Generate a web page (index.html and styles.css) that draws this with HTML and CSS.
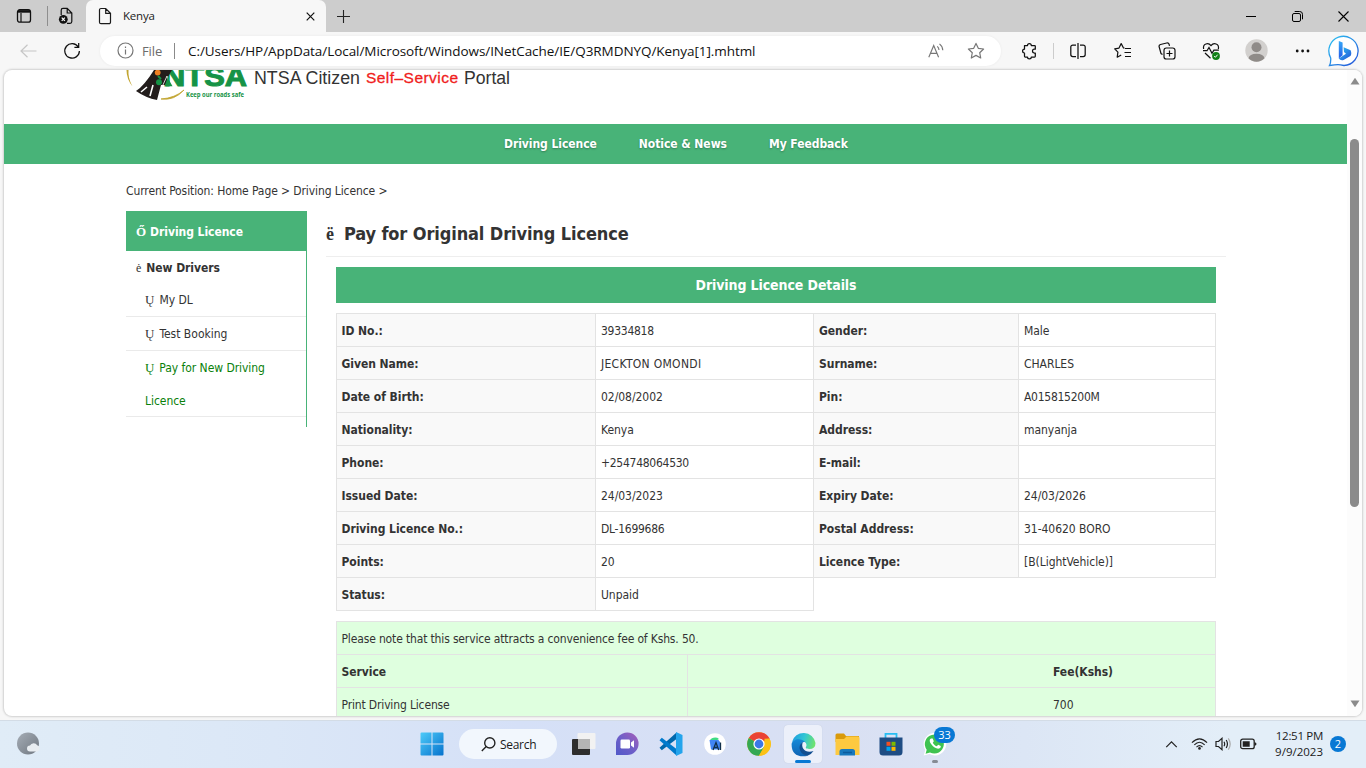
FILE: index.html
```html
<!DOCTYPE html>
<html lang="en">
<head>
<meta charset="utf-8">
<title>Kenya</title>
<link rel="stylesheet" href="styles.css">
</head>
<body>
<header class="tabbar">
  <svg class="tb-workspace" width="16" height="16" viewBox="0 0 16 16" fill="none" stroke="#111"><rect x="1.5" y="1.7" width="13" height="12.5" rx="2.3" stroke-width="1.3"/><path d="M5 5v9" stroke-width="1.2"/><path d="M2 3.4h12" stroke-width="2.6"/></svg>
  <i class="tb-line"></i>
  <svg class="tb-saved" width="16" height="18" viewBox="0 0 16 18" fill="none" stroke="#111" stroke-width="1.2"><path d="M3.2 8V3.2A1.8 1.8 0 0 1 5 1.4h4.2l4.6 4.6v8.5a1.8 1.8 0 0 1-1.8 1.8H9M9.2 1.4V6h4.6"/><circle cx="5.3" cy="12.3" r="4.4" fill="#111" stroke="none"/><path d="m3.7 10.7 3.2 3.2m0-3.2-3.2 3.2" stroke="#fff"/></svg>
  <div class="tab">
    <svg width="14" height="18" viewBox="0 0 14 18" fill="none" stroke="#1b1b1b" stroke-width="1.2"><path d="M3 1.5h4.7L12.5 6.3v8.9a1.5 1.5 0 0 1-1.5 1.5H3a1.5 1.5 0 0 1-1.5-1.5V3A1.5 1.5 0 0 1 3 1.5zM7.7 1.5v4.8h4.8"/></svg>
    <span class="tab-title">Kenya</span>
    <svg class="tab-close" width="9" height="9" viewBox="0 0 9 9" stroke="#111" stroke-width="1.2"><path d="m.7.7 7.6 7.6m0-7.6L.7 8.3"/></svg>
  </div>
  <svg class="new-tab" width="13" height="13" viewBox="0 0 13 13" stroke="#222" stroke-width="1.1"><path d="M6.5 0v13M0 6.5h13"/></svg>
  <div class="win-controls">
    <span><svg width="10" height="10" viewBox="0 0 10 10" stroke="#000"><path d="M0 5.5h10"/></svg></span>
    <span><svg width="11" height="11" viewBox="0 0 11 11" fill="none" stroke="#000"><rect x=".5" y="2.5" width="8" height="8" rx="1.5"/><path d="M2.7.5h5a2.8 2.8 0 0 1 2.8 2.8v5"/></svg></span>
    <span><svg width="11" height="11" viewBox="0 0 11 11" stroke="#000" stroke-width="1.1"><path d="m.5.5 10 10m0-10-10 10"/></svg></span>
  </div>
</header>

<div class="toolbar">
  <svg class="back" width="17" height="14" viewBox="0 0 17 14" fill="none" stroke="#c6c6c6" stroke-width="1.2"><path d="M16.5 7H1M7.5.7 1 7l6.5 6.3"/></svg>
  <svg class="reload" width="18" height="18" viewBox="0 0 18 18" fill="none" stroke="#111" stroke-width="1.25"><path d="M15.3 5A7.3 7.3 0 1 0 16.4 9M15.7 1v4.3h-4.3"/></svg>
  <div class="address">
    <svg width="17" height="17" viewBox="0 0 17 17" fill="none" stroke="#777" stroke-width="1.2"><circle cx="8.5" cy="8.5" r="7.5"/><path d="M8.5 7.5v5M8.5 4.5v1.4"/></svg>
    <span class="scheme">File</span><i></i><span class="url">C:/Users/HP/AppData/Local/Microsoft/Windows/INetCache/IE/Q3RMDNYQ/Kenya[1].mhtml</span>
    <svg class="read" width="16" height="16" viewBox="0 0 16 16" fill="none" stroke="#777" stroke-width="1.15"><path d="M.8 14.2 5.7 2.5l4.9 11.7M2.5 10.300h6.400M9.300 3.300q1.600 1.500 1.700 3.700M11.500.9q3.200 2.600 3.300 6.400"/></svg>
    <svg class="star" width="18" height="18" viewBox="0 0 18 18" fill="none" stroke="#777" stroke-width="1.2" stroke-linejoin="round"><path d="m9 1.400 2.300 4.900 5.300.7-3.900 3.700 1 5.300L9 13.400 4.300 16l1-5.300L1.400 7l5.300-.7z"/></svg>
  </div>
  <div class="actions">
    <svg class="puzzle" width="18" height="18" viewBox="0 0 18 18" fill="none" stroke="#111" stroke-width="1.25" stroke-linejoin="round"><path d="M4.500 3.500h3a1.900 1.900 0 0 1 3.800 0h3.200a.8.8 0 0 1 .8.8v2.900h-.9a1.900 1.900 0 0 0 0 3.800h.9v3.200a.8.8 0 0 1-.8.8h-3.200a1.900 1.900 0 0 1-3.800 0h-2.200a.8.8 0 0 1-.8-.8v-3.200a1.900 1.900 0 0 1 0-3.800z"/></svg>
    <i></i>
    <svg class="split" width="18" height="18" viewBox="0 0 18 18" fill="none" stroke="#111" stroke-width="1.25"><path d="M7 3H3.800a2 2 0 0 0-2 2v7.500a2 2 0 0 0 2 2H7M11 3h3.200a2 2 0 0 1 2 2v7.500a2 2 0 0 1-2 2H11M9 1v16"/></svg>
    <svg class="favs" width="18" height="18" viewBox="0 0 18 18" fill="none" stroke="#111" stroke-width="1.2" stroke-linejoin="round"><path d="M10.500 6.200 9.500 6 7.200 1.600 5 6.100l-4.300.7 3.200 3.400-.7 5 4-2.200M11 6.500h6M10.500 10.500H17M11 14.500h6"/></svg>
    <svg class="collect" width="18" height="18" viewBox="0 0 18 18" fill="none" stroke="#111" stroke-width="1.2"><rect x="6" y="6" width="11" height="11" rx="2.3"/><path d="M11.500 8.500v6M8.500 11.500h6M4.500 12.500 3 11.500 1.200 5a2 2 0 0 1 1.300-2.500L8.700 1a2 2 0 0 1 2.400 1.300l.4 1.500"/></svg>
    <svg class="health" width="18" height="18" viewBox="0 0 18 18" fill="none" stroke="#111" stroke-width="1.2"><path d="M1.600 7C.6 1.500 6.300.2 9 3.600 11.700.2 17.400 1.500 16.400 7M3 11l5.500 5.300M1 8.700h4L7 5.400l3 5.800 1.900-3h5"/><circle cx="14" cy="14" r="3.9" fill="#128017" stroke="none"/><path d="m12.200 14 1.200 1.300 2.200-2.600" stroke="#fff" stroke-width="1"/></svg>
    <svg class="avatar" width="23" height="23" viewBox="0 0 23 23"><circle cx="11.500" cy="11.500" r="11.200" fill="#d2d0ce"/><circle cx="11.500" cy="8.300" r="5" fill="#8f8b88"/><path d="M3.500 19.300q1-4.600 8-4.600t8 4.600a11.200 11.200 0 0 1-16 0z" fill="#8f8b88"/></svg>
    <svg class="dots" width="16" height="4" viewBox="0 0 16 4" fill="#111"><circle cx="2.200" cy="2" r="1.400"/><circle cx="7.600" cy="2" r="1.400"/><circle cx="13" cy="2" r="1.400"/></svg>
    <svg class="bing" width="32" height="32" viewBox="0 0 32 32"><defs><linearGradient id="bo" x1="0" y1="0" x2="1" y2="1"><stop stop-color="#2cc5f2"/><stop offset="1" stop-color="#2450d8"/></linearGradient><linearGradient id="bi" x1="0" y1="0" x2="0" y2="1"><stop stop-color="#36a8f7"/><stop offset="1" stop-color="#245be8"/></linearGradient></defs><path d="M1.500 30.500q1.500-2.500 1.200-7.500A14.600 14.600 0 1 1 16 30.500q-4-.8-6-.8-3 0-8.500.8z" fill="#fff" stroke="url(#bo)" stroke-width="1.3"/><path d="m10.800 6 3.800 1.500v12.800l-3.800 3.300z" fill="url(#bi)"/><path d="m15.600 12.200 7 3c1 2.500.9 4.500-.2 5.900l-6.800 3.900q-3.100 1-4.800-1.400l7.200-4.800-2-1.700z" fill="url(#bo)"/></svg>
  </div>
</div>

<div class="viewport">
  <main class="page">
    <div class="brand">
      <svg width="390" height="36" viewBox="0 0 390 36">
        <path d="M.5 0Q.5 9 6.500 16.500 1.800 8 2.500 0z" fill="#c2a531"/>
        <path d="M35 29q13 2 23-9-9 8-23 9z" fill="#c2a531" stroke="#c2a531" stroke-width=".8"/>
        <text class="logo-word" x="37" y="16.3" textLength="84" lengthAdjust="spacingAndGlyphs">NTSA</text>
        <path d="M10 21q8-5 18-21h18q-5 7-7 15h-4l-4 15q-11-2-21-9z" fill="#231d1c"/>
        <path d="m15 22 6-5m3 9 3-11" stroke="#fff" stroke-width="1.6"/>
        <path d="m36 17 5-11 2 9" stroke="#fff" stroke-width=".8" fill="none"/>
        <path d="m40 16.300 1.500-9 5 9z" fill="#169346"/>
        <circle cx="31.700" cy="2.600" r="2.900" fill="#ef7f22"/><circle cx="33" cy="12.300" r="3" fill="#169346"/><path d="m32 6 3 3" stroke="#169346" stroke-width="2"/>
        <text class="logo-tag" x="60" y="26.500" textLength="58" lengthAdjust="spacingAndGlyphs">Keep our roads safe</text>
        <text class="portal" x="128" y="13.500" textLength="106" lengthAdjust="spacingAndGlyphs">NTSA Citizen</text>
        <text class="portal self" x="240" y="13" textLength="92" lengthAdjust="spacing">Self–Service</text>
        <text class="portal" x="338" y="13.500" textLength="46" lengthAdjust="spacingAndGlyphs">Portal</text>
      </svg>
    </div>
    <nav class="nav"><a>Driving Licence</a><a>Notice &amp; News</a><a>My Feedback</a></nav>
    <div class="wrap">
      <div class="crumbs">Current Position: Home Page &gt; Driving Licence &gt;</div>
      <div class="cols">
        <aside class="side">
          <h2><b class="glyph">Ő</b>Driving Licence</h2>
          <h3><b class="glyph">ė</b>New Drivers</h3>
          <ul>
            <li><b class="glyph">Ų</b>My DL</li>
            <li><b class="glyph">Ų</b>Test Booking</li>
            <li class="current"><b class="glyph">Ų</b>Pay for New Driving Licence</li>
          </ul>
        </aside>
        <section class="main">
          <h1><b class="glyph">ë</b>Pay for Original Driving Licence</h1>
          <div class="panel">
            <div class="banner">Driving Licence Details</div>
            <table class="details">
              <colgroup><col class="c1"><col class="c2"><col class="c3"><col class="c4"></colgroup>
              <tr><th>ID No.:</th><td class="num">39334818</td><th>Gender:</th><td>Male</td></tr>
              <tr><th>Given Name:</th><td class="caps">JECKTON OMONDI</td><th>Surname:</th><td>CHARLES</td></tr>
              <tr><th>Date of Birth:</th><td>02/08/2002</td><th>Pin:</th><td class="num">A015815200M</td></tr>
              <tr><th>Nationality:</th><td>Kenya</td><th>Address:</th><td>manyanja</td></tr>
              <tr><th>Phone:</th><td class="num">+254748064530</td><th>E-mail:</th><td></td></tr>
              <tr><th>Issued Date:</th><td>24/03/2023</td><th>Expiry Date:</th><td>24/03/2026</td></tr>
              <tr><th>Driving Licence No.:</th><td class="num">DL-1699686</td><th>Postal Address:</th><td>31-40620 BORO</td></tr>
              <tr><th>Points:</th><td>20</td><th>Licence Type:</th><td>[B(LightVehicle)]</td></tr>
              <tr><th>Status:</th><td>Unpaid</td></tr>
            </table>
            <table class="fees">
              <colgroup><col class="f1"><col class="f2"></colgroup>
              <tr><td colspan="2" class="note">Please note that this service attracts a convenience fee of Kshs. 50.</td></tr>
              <tr><th>Service</th><th class="fee">Fee(Kshs)</th></tr>
              <tr><td class="note">Print Driving License</td><td class="fee">700</td></tr>
            </table>
          </div>
        </section>
      </div>
    </div>
  </main>
  <div class="scroll"><svg width="10" height="8" viewBox="0 0 10 8"><path d="M5 .8 9.500 7.500H.5z" fill="#8b8b8b"/></svg><i></i><svg class="down" width="10" height="8" viewBox="0 0 10 8"><path d="M5 7.200 9.500.5H.5z" fill="#8b8b8b"/></svg></div>
</div>

<footer class="taskbar">
  <svg class="weather" width="24" height="24" viewBox="0 0 24 24"><defs><linearGradient id="wg" x1="0" y1="0" x2="1" y2="1"><stop stop-color="#a5adb6"/><stop offset="1" stop-color="#707780"/></linearGradient></defs><circle cx="11" cy="11.500" r="11" fill="url(#wg)"/><path d="M13 19.500a3 3 0 0 1 0-6 4 4 0 0 1 7.200-.2 3.200 3.200 0 0 1 .3 6.200z" fill="#e9edf1"/></svg>
  <svg class="start" width="24" height="24" viewBox="0 0 24 24"><defs><linearGradient id="sg" gradientUnits="userSpaceOnUse" x1="0" y1="0" x2="24" y2="24"><stop stop-color="#4fcdfa"/><stop offset="1" stop-color="#0470cc"/></linearGradient></defs><path d="M.5 1.500q0-1 1-1h10v11H.5zM12.500.5h10q1 0 1 1v10h-11zM.5 12.500h11v11h-10q-1 0-1-1zM12.500 12.500h11v10q0 1-1 1h-10z" fill="url(#sg)"/></svg>
  <div class="search"><svg width="15" height="15" viewBox="0 0 15 15" fill="none" stroke="#222" stroke-width="1.4"><circle cx="8.800" cy="5.900" r="5.100"/><path d="M5.200 9.500.8 14"/></svg><span>Search</span></div>
  <div class="apps">
    <span><svg width="25" height="24" viewBox="0 0 25 24"><rect x="6.500" y="1" width="18" height="16" rx="1" fill="#f2f2f2"/><rect x="1" y="7" width="18" height="16" rx="1" fill="#2e2e2e"/><path d="M7 7h12v10H7z" fill="#b5b5b5"/></svg></span>
    <span><svg width="24" height="24" viewBox="0 0 24 24"><defs><linearGradient id="cg" x1="0" y1="1" x2="1" y2="0"><stop stop-color="#5059c9"/><stop offset=".5" stop-color="#6f5fc8"/><stop offset="1" stop-color="#a85fb8"/></linearGradient></defs><path d="M1 23V12A11.300 11.300 0 1 1 12 23z" fill="url(#cg)"/><rect x="5.500" y="7.500" width="9.500" height="9" rx="1.200" fill="#fff"/><path d="m16 10.500 3-2.300v7.600l-3-2.300z" fill="#fff"/></svg></span>
    <span><svg width="26" height="26" viewBox="0 0 26 26"><path d="M18.500 1.500 1.500 16.800l2.300 2.500L18.500 8z" fill="#0068ac"/><path d="M18.500 24.500 1.500 9.200l2.300-2.500L18.500 18z" fill="#007acc"/><path d="m18 1 6.500 3v18L18 25z" fill="#24a4ec"/></svg></span>
    <span><svg width="22" height="22" viewBox="0 0 22 22"><circle cx="11" cy="11" r="10.800" fill="#fff"/><path d="M6 8a5 3.500 0 0 1 9-2l-5 3z" fill="#3ddc84"/><path d="M5.500 7h9l1.500 2v7.500H7z" fill="#4285f4"/><path d="m9 17 3-7.500 2.700 7.500m-4.600-2.500h3.500M16.500 9.500V17" stroke="#123049" stroke-width="1.3" fill="none"/></svg></span>
    <span><svg width="24" height="24" viewBox="0 0 24 24"><circle cx="12" cy="12" r="11.800" fill="#fbc116"/><path d="M12 12 1.780 6.100A11.800 11.800 0 0 1 22.220 6.100z" fill="#ea4335"/><path d="M1.780 6.100A11.800 11.800 0 0 0 12 23.800L17.100 15 12 12z" fill="#34a853"/><path d="M22.220 6.100A11.800 11.800 0 0 1 12 23.800L17.500 14V6.500z" fill="#fbc116"/><path d="M12 6.600h10.500L22.200 6.100H11z" fill="#ea4335"/><circle cx="12" cy="12" r="5.600" fill="#fff"/><circle cx="12" cy="12" r="4.400" fill="#3b78e7"/></svg></span>
    <span class="active"><svg width="25" height="25" viewBox="0 0 25 25"><defs><linearGradient id="e1" x1="0" y1=".3" x2="1" y2=".5"><stop stop-color="#1e9de0"/><stop offset=".5" stop-color="#31c6d4"/><stop offset="1" stop-color="#6fe36e"/></linearGradient><linearGradient id="e2" x1="0" y1="0" x2="0" y2="1"><stop stop-color="#1689d8"/><stop offset="1" stop-color="#0f64b4"/></linearGradient></defs><path d="M1 10A12 12 0 0 1 24.500 11q0 6-6.300 6c-3.300 0-4-1.200-3-2.400 2.300-4.800-7-9.600-14.200-4.600z" fill="url(#e1)"/><path d="M.6 12C2 6 11 6 14.500 10.200q-4.500-.7-5 4Q9.500 21 16 24 .5 26 .6 12z" fill="url(#e2)"/><path d="M12 10q-3.500 1.500-3.500 6 .8 6.300 7.500 8 4.300-1.300 6.500-5c-7.500 3-13.500-3-10.500-9z" fill="#124f91"/></svg></span>
    <span><svg width="25" height="23" viewBox="0 0 25 23"><path d="M.5 2q0-1.500 1.500-1.500h7l2 2.500H24v6H.5z" fill="#d99a0b"/><path d="M.5 6H9l2.500-2.500H23q1.500 0 1.500 1.500v17H.5z" fill="#fdc940"/><path d="M4.500 22.500v-4q0-2.500 2.500-2.500h10.500q2.500 0 2.500 2.500v4z" fill="#1778bd"/><path d="M8 19.500h9" stroke="#0b5b9d" stroke-width="1.5"/></svg></span>
    <span><svg width="24" height="24" viewBox="0 0 24 24"><path d="M6.500 7V1.800h11V7" fill="none" stroke="#27bdf1" stroke-width="1.8"/><path d="M.5 5.500h23V20q0 3.500-3.500 3.500H4q-3.500 0-3.500-3.500z" fill="#1e4c83"/><path d="M7.500 9.800h4v4h-4z" fill="#f25022"/><path d="M12.500 9.800h4v4h-4z" fill="#7fba00"/><path d="M7.500 14.800h4v4h-4z" fill="#00a4ef"/><path d="M12.500 14.800h4v4h-4z" fill="#ffb900"/></svg></span>
    <span class="whats"><svg width="24" height="24" viewBox="0 0 24 24"><path d="M.7 23.500 2.300 18A11.300 11.300 0 1 1 6.500 22z" fill="#fff"/><path d="m2.600 21.700 1.100-4A9.500 9.500 0 1 1 7 20.500z" fill="#3fc351"/><path d="M8 6.500c-2 1-1.500 3.500.5 6 2.300 3 5.800 5 8.200 3.800 1-.5 1.200-1.300 1-2.200l-2.500-1.300-1.400 1.500c-2-.7-3.300-2.200-4-3.600l1-1.400L9.700 6.600z" fill="#fff"/></svg><em>33</em></span>
  </div>
  <div class="tray">
    <svg width="13" height="7" viewBox="0 0 14 8" fill="none" stroke="#222" stroke-width="1.4"><path d="m1 7 6-6 6 6"/></svg>
    <svg class="wifi" width="17" height="14" viewBox="0 0 18 14" fill="none" stroke="#222" stroke-width="1.2"><path d="M1 5.500Q9-2.500 17 5.500M3.500 8Q9 2.300 14.500 8M5.800 10.300Q9 7.300 12.200 10.300"/><circle cx="9" cy="11.700" r="1.400" fill="#222" stroke="none"/></svg>
    <svg class="vol" width="17" height="14" viewBox="0 0 17 14" fill="none" stroke="#222" stroke-width="1.2"><path d="M1 4.500h2.500L7 1.300v11.400L3.500 9.500H1zM9 4.800q1.300 2.200 0 4.400M11.200 3q2.500 4 0 8"/><path d="M13.300 1.300q3.800 5.700 0 11.400" stroke="#aaa"/></svg>
    <svg class="batt" width="17" height="12" viewBox="0 0 17 12"><rect x=".7" y="1.200" width="13.500" height="9.500" rx="2" fill="none" stroke="#222" stroke-width="1.3"/><path d="M2.700 3.200h7v5.500h-7zM14.500 4.200q2 0 2 1.800t-2 1.800z" fill="#222"/></svg>
    <div class="clock"><span class="time">12:51 PM</span><span>9/9/2023</span></div>
    <em>2</em>
  </div>
</footer>
</body>
</html>
```
FILE: styles.css
```css
* { box-sizing: border-box; }
body { margin: 0; width: 1366px; height: 768px; overflow: hidden; background: #f7f7f7; font: 12px "Open Sans", "Noto Sans", sans-serif; color: #1b1b1b; display: flex; flex-direction: column; }
svg { display: block; flex: none; }
i, em, b.glyph { font-style: normal; }

.tabbar { height: 32px; background: #cdcdcd; display: flex; align-items: center; flex: none; }
.tb-workspace { margin-left: 16px; }
.tb-line { width: 1px; height: 20px; background: #8e8e8e; margin: 0 10px 0 15px; }
.tb-saved { margin-right: 12px; }
.tab { width: 240px; height: 32px; background: #f7f7f7; border-radius: 7px 7px 0 0; display: flex; align-items: center; padding: 0 11px 0 12px; }
.tab-title { margin-left: 11px; font-size: 11.5px; letter-spacing: -.2px; padding-bottom: 1px; }
.tab-close { margin-left: auto; }
.new-tab { margin-left: 11px; }
.win-controls { margin-left: auto; display: flex; }
.win-controls span { width: 46px; display: flex; justify-content: center; }

.toolbar { height: 37px; display: flex; align-items: center; flex: none; }
.back { margin-left: 20px; }
.reload { margin: 0 19px 0 26px; }
.address { width: 901px; height: 30px; border-radius: 15px; background: #fff; display: flex; align-items: center; padding: 0 16px 0 17px; box-shadow: 0 0 3px rgba(0,0,0,.06); }
.scheme { color: #6c6c6c; width: 24px; margin-left: 8px; font-size: 13px; letter-spacing: -.1px; }
.address i { width: 1px; height: 16px; background: #8a8a8a; margin: 0 13px 0 8px; }
.url { font-size: 13.5px; color: #111; letter-spacing: -.06px; white-space: nowrap; }
.read { margin-left: auto; }
.star { margin-left: 23px; }
.actions { display: flex; align-items: center; }
.actions i { width: 1px; height: 16px; background: #ccc; margin: 0 15px 0 15px; }
.puzzle { margin-left: 19px; }
.favs { margin-left: 27px; }
.collect { margin-left: 26px; }
.health { margin-left: 26px; }
.avatar { margin-left: 25px; }
.dots { margin-left: 27px; }
.bing { margin-left: 17px; }

.viewport { margin: 1px 4px 0; height: 646px; background: #fff; border-radius: 8px; overflow: hidden; display: flex; flex: none; box-shadow: 0 0 2px 1px rgba(0,0,0,.16); }
.page { width: 1343px; font: 12px/33px "DejaVu Sans Condensed", "DejaVu Sans", sans-serif; font-stretch: condensed; color: #333; }
.scroll { width: 15px; background: #fcfcfc; display: flex; flex-direction: column; align-items: center; padding: 7px 0 8px; }
.scroll i { width: 9px; height: 368px; margin-top: 54px; border-radius: 5px; background: #8b8b8b; }
.down { margin-top: auto; }

.brand { height: 54px; padding-left: 122px; }
.logo-word { font: bold 27px "Liberation Sans", sans-serif; fill: #169346; stroke: #169346; stroke-width: 1px; }
.logo-tag { font: bold 6.5px "Open Sans", sans-serif; fill: #169346; }
.portal { font: 18px "Liberation Sans", sans-serif; fill: #333; }
.self { font-size: 15.5px; fill: #f01d1d; stroke: #f01d1d; stroke-width: .3px; }
.nav { height: 40px; background: #48b378; color: #fff; display: flex; align-items: center; gap: 42px; padding-left: 500px; font-weight: bold; letter-spacing: -.05px; text-shadow: 0 1px 2px rgba(0,0,0,.3); }
.wrap { width: 1100px; margin-left: 122px; }
.crumbs { height: 47px; line-height: 54px; letter-spacing: -.1px; }
.cols { display: flex; align-items: flex-start; gap: 19px; }
.side { width: 181px; height: 216px; border-right: 1px solid #48b378; }
.glyph { font: 13px "Liberation Serif", serif; margin-right: 5px; }
h1, h2, h3 { margin: 0; }
h2 { height: 40px; width: 181px; line-height: 42px; background: #48b378; color: #fff; padding-left: 10px; font-size: 12px; letter-spacing: -.05px; }
h2 .glyph { margin-right: 4px; font-weight: bold; }
h3 { height: 32px; line-height: 34px; padding-left: 10px; font-size: 12px; letter-spacing: -.05px; }
h3 .glyph { font-size: 12px; }
ul { margin: 0; padding: 0; list-style: none; }
li { padding: 1px 20px 0 19px; height: 34px; border-bottom: 1px solid #eaeaea; }
li.current { height: 66px; }
li .glyph { font-size: 13px; margin-right: 5px; line-height: 1; }
.current { color: #0a800a; letter-spacing: -.05px; }
.main { width: 900px; }
h1 { height: 46px; line-height: 45px; border-bottom: 1px solid #eee; font-size: 18px; letter-spacing: -.11px; }
h1 .glyph { font-size: 18px; margin-right: 10px; font-weight: bold; }
.panel { padding: 10px 10px 0; width: 900px; }
.banner { height: 36px; line-height: 36px; background: #48b378; color: #fff; text-align: center; font-size: 14px; letter-spacing: -.1px; font-weight: bold; }
table { border-collapse: separate; border-spacing: 0; table-layout: fixed; width: 880px; margin-top: 10px; }
th, td { height: 33px; padding: 2px 5px 0; line-height: 30px; border: solid #e3e3e3; border-width: 0 1px 1px 0; text-align: left; white-space: nowrap; letter-spacing: -.04px; }
tr:first-child > * { border-top-width: 1px; height: 34px; }
tr > :first-child { border-left-width: 1px; padding-left: 4.5px; }
.details th { background: #f9f9f9; letter-spacing: -.04px; }
.num { letter-spacing: -.27px; }
.caps { letter-spacing: .3px; }
.note { letter-spacing: -.15px; }
.c1 { width: 260px; } .c2 { width: 218px; } .c3 { width: 205px; } .c4 { width: 197px; }
.fees { background: #dfffdf; }
.f1 { width: 352px; } .f2 { width: 528px; }
.fees .fee { padding-left: 365px; }

.taskbar { height: 48px; margin-top: auto; padding-bottom: 1px; border-top: 1px solid #d3dce6; background: linear-gradient(90deg, #e0ecf7 0, #dbe7f7 20%, #d5e0f7 38%, #d9e0f3 62%, #dce6f5 75%, #e3eef8 90%); display: flex; align-items: center; flex: none; }
.weather { margin-left: 17px; }
.start { margin-left: 379px; }
.search { margin-left: 15px; width: 98px; height: 30px; border-radius: 15px; background: #f2f7fd; display: flex; align-items: center; padding-left: 22px; gap: 4px; letter-spacing: -.3px; }
.apps { display: flex; margin-left: 4px; }
.apps span { width: 44px; height: 38px; display: flex; align-items: center; justify-content: center; position: relative; }
.active::before { content: ""; position: absolute; inset: 0 3px; border-radius: 4px; background: #ecf0fa; box-shadow: 0 0 1px #bbc2d3; z-index: 0; }
.active svg { position: relative; }
.active::after, .whats::after { content: ""; position: absolute; bottom: 0; width: 16px; height: 3px; border-radius: 2px; background: #0878d4; }
.whats::after { width: 6px; background: #868b94; }
.whats em { position: absolute; left: 21px; top: 2px; width: 21px; height: 16px; border-radius: 8px; background: #0878d4; color: #fff; font-size: 11px; line-height: 16px; text-align: center; }
.tray { margin-left: auto; display: flex; align-items: center; padding-right: 20px; }
.wifi { margin-left: 13px; }
.vol { margin-left: 7px; }
.batt { margin-left: 8px; }
.clock { width: 66px; display: flex; flex-direction: column; text-align: right; line-height: 16px; font-size: 11.5px; }
.time { letter-spacing: -.3px; }
.tray em { width: 16px; height: 16px; border-radius: 8px; margin-left: 7px; background: #0878d4; color: #fff; font-size: 11px; line-height: 16px; text-align: center; }
```
